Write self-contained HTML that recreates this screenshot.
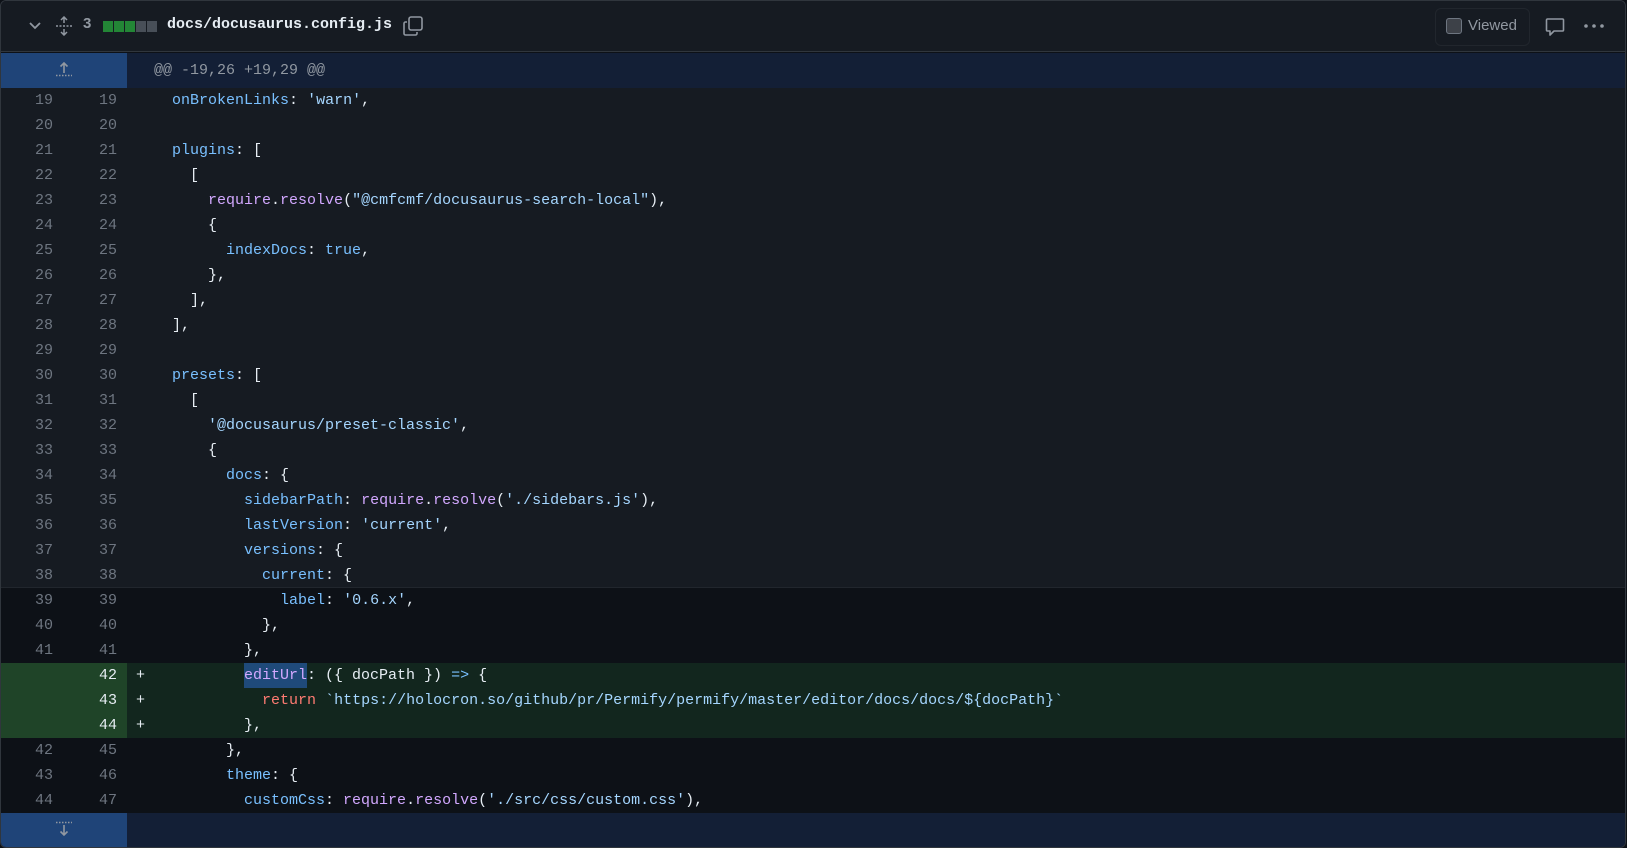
<!DOCTYPE html>
<html><head><meta charset="utf-8"><style>
*{margin:0;padding:0;box-sizing:border-box}
body{width:1627px;height:848px;background:#0d1117;overflow:hidden;font-family:"Liberation Mono",monospace;}
.frame{position:absolute;left:0;top:0;width:1626px;height:848px;border:1px solid #30363d;border-radius:6px;overflow:hidden;background:#0d1117}
.hdr{position:absolute;left:0;top:0;width:100%;height:51px;background:#161b22;border-bottom:1px solid #30363d}
.row{position:absolute;left:0;width:100%;height:25px;font-size:15px;line-height:25px;white-space:pre;color:#e6edf3}
.n1,.n2{position:absolute;top:0;width:40px;text-align:right;color:#6e7681}
.n1{left:12px}.n2{left:76px}
.c{position:absolute;left:153px;top:0}
.m{position:absolute;left:135px;top:0;color:#e6edf3}
.ctx{background:#161b22}
.add{background:#12261e}
.add .g{position:absolute;left:0;top:0;width:126px;height:25px;background:#1f4428}
.add .n2{color:#e6edf3}
.k{color:#79c0ff}.s{color:#a5d6ff}.f{color:#d2a8ff}.r{color:#ff7b72}
.sel{background:#1f4a7a;display:inline-block;height:25px;vertical-align:top}
.hunk{position:absolute;left:0;width:100%;height:35px;background:#131f36}
.hunk .g{position:absolute;left:0;top:0;width:126px;height:100%;background:#1f4478}
</style></head><body>
<div class="frame">
<div class="hdr">
 <svg style="position:absolute;left:27px;top:19px" width="14" height="12" viewBox="0 0 14 12"><path d="M2 3l5 5 5-5" fill="none" stroke="#9198a1" stroke-width="1.8"/></svg>
 <svg style="position:absolute;left:54px;top:15px" width="18" height="20" viewBox="0 0 18 20"><path d="M9 1v6M6 4l3-3 3 3M9 19v-6M6 16l3 3 3-3" fill="none" stroke="#9198a1" stroke-width="1.5"/><path d="M1 10h16" stroke="#9198a1" stroke-width="1.5" stroke-dasharray="2 1.5"/></svg>
 <div style="position:absolute;left:82px;top:14px;font:bold 15px 'Liberation Sans',sans-serif;color:#9198a1">3</div>
 <div style="position:absolute;left:102px;top:20px;width:10px;height:11px;background:#238636"></div>
 <div style="position:absolute;left:113px;top:20px;width:10px;height:11px;background:#238636"></div>
 <div style="position:absolute;left:124px;top:20px;width:10px;height:11px;background:#238636"></div>
 <div style="position:absolute;left:135px;top:20px;width:10px;height:11px;background:#484f58"></div>
 <div style="position:absolute;left:146px;top:20px;width:10px;height:11px;background:#484f58"></div>
 <div style="position:absolute;left:166px;top:15px;font-size:15px;font-weight:bold;color:#e6edf3;white-space:pre">docs/docusaurus.config.js</div>
 <svg style="position:absolute;left:401px;top:14px" width="22" height="22" viewBox="0 0 22 22"><rect x="7" y="2" width="13" height="13" rx="2" fill="none" stroke="#9198a1" stroke-width="1.6"/><path d="M5 7H3.5A1.5 1.5 0 0 0 2 8.5v10A1.5 1.5 0 0 0 3.5 20h10a1.5 1.5 0 0 0 1.5-1.5V17" fill="none" stroke="#9198a1" stroke-width="1.6"/></svg>
 <div style="position:absolute;left:1434px;top:7px;width:95px;height:38px;border:1px solid #21262d;border-radius:6px"></div>
 <div style="position:absolute;left:1445px;top:17px;width:16px;height:16px;border:1px solid #6e7681;border-radius:3px;background:#3d4148"></div>
 <div style="position:absolute;left:1467px;top:16px;font:15px 'Liberation Sans',sans-serif;color:#9198a1">Viewed</div>
 <svg style="position:absolute;left:1544px;top:16px" width="20" height="20" viewBox="0 0 20 20"><path d="M2.5 2h15a1 1 0 0 1 1 1v10a1 1 0 0 1-1 1H9l-4 4v-4H2.5a1 1 0 0 1-1-1V3a1 1 0 0 1 1-1z" fill="none" stroke="#9198a1" stroke-width="1.6" stroke-linejoin="round"/></svg>
 <svg style="position:absolute;left:1582px;top:21px" width="22" height="8" viewBox="0 0 22 8"><circle cx="3" cy="4" r="1.8" fill="#9198a1"/><circle cx="11" cy="4" r="1.8" fill="#9198a1"/><circle cx="19" cy="4" r="1.8" fill="#9198a1"/></svg>
</div>
<div class="hunk" style="top:52px"><div class="g"><svg style="position:absolute;left:53px;top:7px" width="20" height="18" viewBox="0 0 20 18"><path d="M10 13V3M6.5 6.5L10 3l3.5 3.5" fill="none" stroke="#9198a1" stroke-width="1.6"/><path d="M2 15.5h16" stroke="#9198a1" stroke-width="1.4" stroke-dasharray="1.5 1.5"/></svg></div>
<div style="position:absolute;left:153px;top:0;line-height:35px;font-size:15px;color:#9198a1;white-space:pre">@@ -19,26 +19,29 @@</div></div>

<div class="row ctx" style="top:87px"><span class="n1">19</span><span class="n2">19</span><span class="c">  <span class="k">onBrokenLinks</span>: <span class="s">'warn'</span>,</span></div>
<div class="row ctx" style="top:112px"><span class="n1">20</span><span class="n2">20</span><span class="c"></span></div>
<div class="row ctx" style="top:137px"><span class="n1">21</span><span class="n2">21</span><span class="c">  <span class="k">plugins</span>: [</span></div>
<div class="row ctx" style="top:162px"><span class="n1">22</span><span class="n2">22</span><span class="c">    [</span></div>
<div class="row ctx" style="top:187px"><span class="n1">23</span><span class="n2">23</span><span class="c">      <span class="f">require</span>.<span class="f">resolve</span>(<span class="s">"@cmfcmf/docusaurus-search-local"</span>),</span></div>
<div class="row ctx" style="top:212px"><span class="n1">24</span><span class="n2">24</span><span class="c">      {</span></div>
<div class="row ctx" style="top:237px"><span class="n1">25</span><span class="n2">25</span><span class="c">        <span class="k">indexDocs</span>: <span class="k">true</span>,</span></div>
<div class="row ctx" style="top:262px"><span class="n1">26</span><span class="n2">26</span><span class="c">      },</span></div>
<div class="row ctx" style="top:287px"><span class="n1">27</span><span class="n2">27</span><span class="c">    ],</span></div>
<div class="row ctx" style="top:312px"><span class="n1">28</span><span class="n2">28</span><span class="c">  ],</span></div>
<div class="row ctx" style="top:337px"><span class="n1">29</span><span class="n2">29</span><span class="c"></span></div>
<div class="row ctx" style="top:362px"><span class="n1">30</span><span class="n2">30</span><span class="c">  <span class="k">presets</span>: [</span></div>
<div class="row ctx" style="top:387px"><span class="n1">31</span><span class="n2">31</span><span class="c">    [</span></div>
<div class="row ctx" style="top:412px"><span class="n1">32</span><span class="n2">32</span><span class="c">      <span class="s">'@docusaurus/preset-classic'</span>,</span></div>
<div class="row ctx" style="top:437px"><span class="n1">33</span><span class="n2">33</span><span class="c">      {</span></div>
<div class="row ctx" style="top:462px"><span class="n1">34</span><span class="n2">34</span><span class="c">        <span class="k">docs</span>: {</span></div>
<div class="row ctx" style="top:487px"><span class="n1">35</span><span class="n2">35</span><span class="c">          <span class="k">sidebarPath</span>: <span class="f">require</span>.<span class="f">resolve</span>(<span class="s">'./sidebars.js'</span>),</span></div>
<div class="row ctx" style="top:512px"><span class="n1">36</span><span class="n2">36</span><span class="c">          <span class="k">lastVersion</span>: <span class="s">'current'</span>,</span></div>
<div class="row ctx" style="top:537px"><span class="n1">37</span><span class="n2">37</span><span class="c">          <span class="k">versions</span>: {</span></div>
<div class="row ctx" style="top:562px;border-bottom:1px solid #21262d"><span class="n1">38</span><span class="n2">38</span><span class="c">            <span class="k">current</span>: {</span></div>
<div class="row" style="top:587px"><span class="n1">39</span><span class="n2">39</span><span class="c">              <span class="k">label</span>: <span class="s">'0.6.x'</span>,</span></div>
<div class="row" style="top:612px"><span class="n1">40</span><span class="n2">40</span><span class="c">            },</span></div>
<div class="row" style="top:637px"><span class="n1">41</span><span class="n2">41</span><span class="c">          },</span></div>
<div class="row add" style="top:662px"><span class="g"></span><span class="n2">42</span><span class="m">+</span><span class="c">          <span class="f sel">editUrl</span>: ({ docPath }) <span class="k">=&gt;</span> {</span></div>
<div class="row add" style="top:687px"><span class="g"></span><span class="n2">43</span><span class="m">+</span><span class="c">            <span class="r">return</span> <span class="s">`https://holocron.so/github/pr/Permify/permify/master/editor/docs/docs/${docPath}`</span></span></div>
<div class="row add" style="top:712px"><span class="g"></span><span class="n2">44</span><span class="m">+</span><span class="c">          },</span></div>
<div class="row" style="top:737px"><span class="n1">42</span><span class="n2">45</span><span class="c">        },</span></div>
<div class="row" style="top:762px"><span class="n1">43</span><span class="n2">46</span><span class="c">        <span class="k">theme</span>: {</span></div>
<div class="row" style="top:787px"><span class="n1">44</span><span class="n2">47</span><span class="c">          <span class="k">customCss</span>: <span class="f">require</span>.<span class="f">resolve</span>(<span class="s">'./src/css/custom.css'</span>),</span></div>
<div class="hunk" style="top:812px"><div class="g"><svg style="position:absolute;left:53px;top:7px" width="20" height="18" viewBox="0 0 20 18"><path d="M2 2.5h16" stroke="#9198a1" stroke-width="1.4" stroke-dasharray="1.5 1.5"/><path d="M10 5v10M6.5 11.5L10 15l3.5-3.5" fill="none" stroke="#9198a1" stroke-width="1.6"/></svg></div></div>
</div>
</body></html>
